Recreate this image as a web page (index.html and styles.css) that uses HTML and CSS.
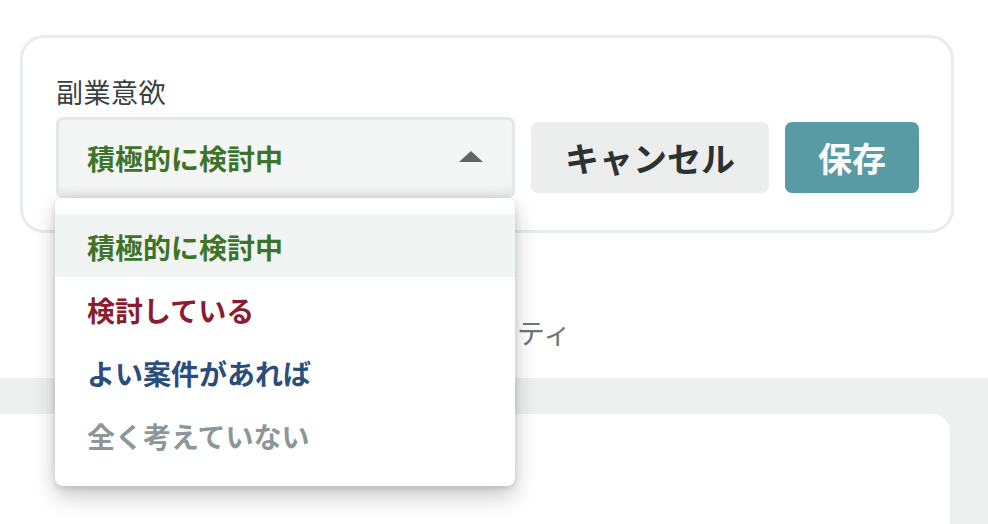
FILE: index.html
```html
<!DOCTYPE html>
<html lang="ja">
<head>
<meta charset="utf-8">
<link rel="stylesheet" href="styles.css">
</head>
<body>
<div class="page">
  <section class="edit-card">
    <div class="field-label">副業意欲</div>
    <div class="field-row">
      <div class="select-wrap">
        <div class="select">
          <span class="select-value">積極的に検討中</span>
          <span class="caret"></span>
        </div>
        <ul class="menu">
          <li class="opt opt-green active">積極的に検討中</li>
          <li class="opt opt-red">検討している</li>
          <li class="opt opt-blue">よい案件があれば</li>
          <li class="opt opt-gray">全く考えていない</li>
        </ul>
      </div>
      <button class="btn btn-cancel">キャンセル</button>
      <button class="btn btn-save">保存</button>
    </div>
  </section>
  <div class="hint-row"><span class="hint">ティ</span></div>
  <div class="band">
    <div class="lower-card"></div>
  </div>
</div>
</body>
</html>
```
FILE: styles.css
```css
* { box-sizing: border-box; }
html, body { margin: 0; padding: 0; background: #ffffff; }
body {
  font-family: "Noto Sans CJK JP", "Noto Sans", sans-serif;
  width: 988px;
  height: 524px;
  overflow: hidden;
}
.page { padding-top: 35px; height: 524px; overflow: hidden; }
.edit-card {
  margin: 0 34px 0 20px;
  border: 3px solid #e8ecea;
  border-radius: 24px;
  padding: 34px 32px 32px 33px;
  background: #fff;
}
.field-label {
  font-size: 27px;
  line-height: 40px;
  color: #3a3f40;
  margin-bottom: 5px;
  letter-spacing: 0.5px;
}
.field-row {
  display: flex;
  align-items: center;
  gap: 16px;
}
.select-wrap {
  position: relative;
  width: 459px;
  flex: none;
}
.select {
  height: 81px;
  border: 3px solid #e4e8e7;
  border-radius: 7px;
  background: #f4f6f5;
  box-shadow: inset 0 -8px 10px -4px rgba(0,0,0,0.06);
  display: flex;
  align-items: center;
  justify-content: space-between;
  padding: 0 29px 0 28px;
}
.select-value {
  font-size: 28px;
  font-weight: 700;
  color: #3e7329;
  line-height: 1;
}
.caret {
  width: 0; height: 0;
  border-left: 12.5px solid transparent;
  border-right: 12.5px solid transparent;
  border-bottom: 11px solid #636565;
  margin-top: -2px;
}
.menu {
  position: absolute;
  top: 81px;
  left: -1px;
  width: 460px;
  margin: 0;
  padding: 16px 0 20px;
  list-style: none;
  background: #fff;
  border-radius: 8px;
  box-shadow: 0 10px 22px rgba(0,0,0,0.22), 0 2px 6px rgba(0,0,0,0.12);
  z-index: 10;
}
.opt {
  height: 63px;
  display: flex;
  align-items: center;
  padding: 3px 0 0 32px;
  font-size: 28px;
  font-weight: 700;
  line-height: 1;
}
.opt.active { background: #f0f5f4; }
.opt-green { color: #3e7329; }
.opt-red { color: #8a1c30; }
.opt-blue { color: #2a4d7c; }
.opt-gray { color: #8c9799; }
.btn {
  font-family: inherit;
  border: none;
  border-radius: 7px;
  height: 71px;
  padding: 0 34px;
  font-size: 34px;
  font-weight: 700;
  line-height: 1;
  cursor: pointer;
}
.btn-cancel { background: #ebeeed; color: #2b3234; }
.btn-save { background: #589ba4; color: #ffffff; padding: 0 33px; }
.hint-row {
  height: 145px;
  padding: 79px 0 0 517px;
}
.hint {
  font-size: 28px;
  line-height: 40px;
  color: #6c7777;
  white-space: nowrap;
}
.band {
  background: #eef0ef;
  height: 146px;
  padding-top: 36px;
  overflow: hidden;
}
.lower-card {
  margin-left: -20px;
  width: 970px;
  height: 200px;
  background: #fff;
  border-radius: 18px;
}
```
